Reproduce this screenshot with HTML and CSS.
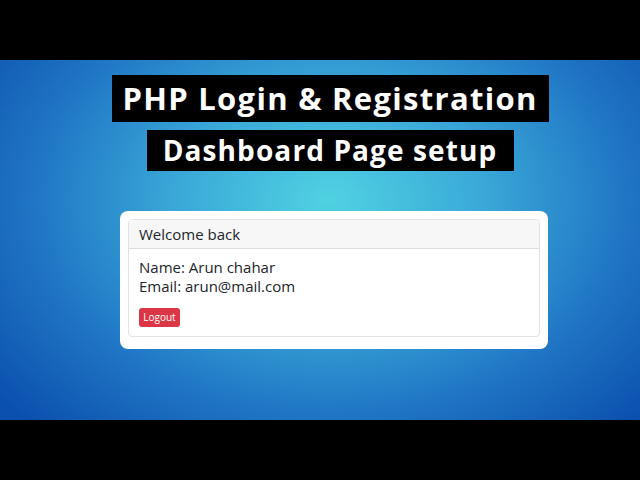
FILE: index.html
```html
<!DOCTYPE html>
<html>
<head>
<meta charset="utf-8">
<link rel="stylesheet" href="styles.css">
</head>
<body>
<div class="bar"></div>
<main class="stage">
  <h1 class="title title-main">PHP Login &amp; Registration</h1>
  <h2 class="title title-sub">Dashboard Page setup</h2>
  <div class="frame">
    <div class="card">
      <div class="card-header">Welcome back</div>
      <div class="card-body">
        <p class="line">Name: Arun chahar</p>
        <p class="line">Email: arun@mail.com</p>
        <button class="btn-logout">Logout</button>
      </div>
    </div>
  </div>
</main>
<div class="bar"></div>
</body>
</html>
```
FILE: styles.css
```css
html, body {
  margin: 0;
  padding: 0;
  width: 640px;
  height: 480px;
  overflow: hidden;
  background: #000;
}
.bar {
  height: 60px;
  background: #000;
}
.stage {
  height: 360px;
  box-sizing: border-box;
  padding: 15px 0 0 20px;
  display: flex;
  flex-direction: column;
  align-items: center;
  background: radial-gradient(ellipse 430px 310px at 330px 140px, #50d2e2 0%, #3aa9d8 35%, #1f74c4 70%, #0b50ae 100%);
}
.title {
  margin: 0;
  background: #000;
  color: #fff;
  font-family: "Open Sans", "Liberation Sans", sans-serif;
  font-weight: 700;
  font-variant-ligatures: none;
  white-space: nowrap;
  box-sizing: border-box;
  text-align: center;
}
.title-main {
  width: 437px;
  height: 47px;
  line-height: 46px;
  font-size: 31px;
  letter-spacing: 1.3px;
}
.title-sub {
  margin-top: 8px;
  width: 367px;
  height: 41px;
  line-height: 40px;
  font-size: 28px;
  letter-spacing: 1.1px;
}
.frame {
  margin: 40px 0 0 8px;
  width: 428px;
  height: 138px;
  box-sizing: border-box;
  padding: 8px;
  background: #fff;
  border-radius: 8px;
}
.card {
  height: 118px;
  box-sizing: border-box;
  border: 1px solid #e2e2e2;
  border-radius: 4px;
  font-family: "Open Sans", "DejaVu Sans", sans-serif;
  color: #212529;
  overflow: hidden;
}
.card-header {
  height: 29px;
  box-sizing: border-box;
  padding: 0 10px;
  line-height: 28px;
  font-size: 15px;
  background: #f7f7f7;
  border-bottom: 1px solid #dedede;
}
.card-body {
  padding: 9px 10px 0;
}
.line {
  margin: 0;
  font-size: 15px;
  line-height: 19px;
}
.btn-logout {
  display: block;
  margin-top: 12px;
  width: 41px;
  height: 19px;
  padding: 0;
  border: none;
  border-radius: 3px;
  background: #dc3545;
  color: #fff;
  font-family: "Open Sans", "DejaVu Sans", sans-serif;
  font-size: 10px;
  line-height: 19px;
}
```
